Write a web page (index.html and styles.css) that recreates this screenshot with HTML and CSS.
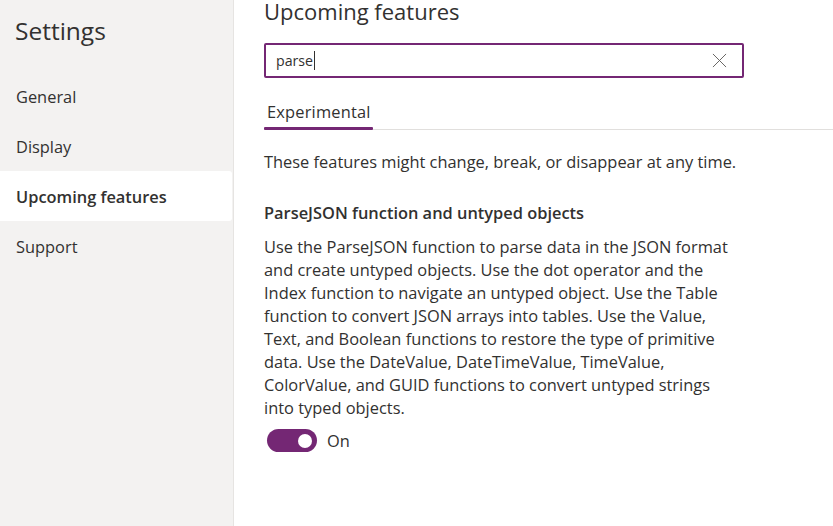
FILE: index.html
```html
<!DOCTYPE html>
<html lang="en">
<head>
<meta charset="utf-8">
<title>Settings</title>
<link rel="stylesheet" href="styles.css">
</head>
<body>
<div class="app">
  <aside class="sidebar">
    <h1 class="sidebar-title">Settings</h1>
    <nav class="nav">
      <div class="nav-item">General</div>
      <div class="nav-item">Display</div>
      <div class="nav-item selected">Upcoming features</div>
      <div class="nav-item">Support</div>
    </nav>
  </aside>
  <main class="main">
    <h2 class="page-title">Upcoming features</h2>
    <div class="search">
      <span class="search-text">parse</span><span class="caret"></span>
      <svg class="clear-icon" width="16" height="16" viewBox="0 0 16 16" aria-hidden="true">
        <path d="M1 1 L15 15 M15 1 L1 15" stroke="#605e5c" stroke-width="1" fill="none"/>
      </svg>
    </div>
    <div class="tabs">
      <div class="tab active">Experimental</div>
    </div>
    <p class="desc">These features might change, break, or disappear at any time.</p>
    <h3 class="feature-title">ParseJSON function and untyped objects</h3>
    <p class="feature-text">Use the ParseJSON function to parse data in the JSON format and create untyped objects. Use the dot operator and the Index function to navigate an untyped object. Use the Table function to convert JSON arrays into tables. Use the Value, Text, and Boolean functions to restore the type of primitive data. Use the DateValue, DateTimeValue, TimeValue, ColorValue, and GUID functions to convert untyped strings into typed objects.</p>
    <div class="toggle-row">
      <span class="toggle"><span class="knob"></span></span>
      <span class="toggle-label">On</span>
    </div>
  </main>
</div>
</body>
</html>
```

FILE: styles.css
```css
* { box-sizing: border-box; }
html, body {
  margin: 0;
  padding: 0;
  height: 100%;
  overflow: hidden;
}
body {
  font-family: "Segoe UI", "Open Sans", "Noto Sans", sans-serif;
  color: #323130;
  background: #ffffff;
  font-size: 16.4px;
}
.app {
  display: flex;
  height: 526px;
}
.sidebar {
  width: 234px;
  flex: none;
  background: #f3f2f1;
  border-right: 1px solid #e6e4e2;
  padding-right: 1px;
}
.sidebar-title {
  margin: 0;
  padding: 15px 0 0 15px;
  height: 71px;
  font-size: 24.5px;
  font-weight: 400;
  line-height: 32px;
}
.nav { display: flex; flex-direction: column; }
.nav-item {
  height: 50px;
  display: flex;
  align-items: center;
  padding-left: 16px;
  font-size: 16.4px;
}
.nav-item.selected {
  background: #ffffff;
  border-radius: 0 3px 3px 0;
  font-weight: 600;
}
.main {
  flex: 1;
  padding-left: 30px;
  min-width: 0;
}
.page-title {
  margin: 0;
  font-size: 22px;
  font-weight: 400;
  line-height: 22px;
  height: 22px;
}
.search {
  margin-top: 21px;
  width: 480px;
  height: 35px;
  border: 2px solid #742774;
  border-radius: 2px;
  display: flex;
  align-items: center;
  padding: 0 12px 0 10px;
}
.search-text {
  font-size: 14.2px;
  color: #323130;
}
.caret {
  width: 1px;
  height: 19px;
  background: #323130;
  margin-left: 1px;
}
.clear-icon {
  margin-left: auto;
  width: 15px;
  height: 15px;
  margin-right: 3px;
}
.tabs {
  margin-top: 17px;
  height: 35px;
  border-bottom: 1px solid #e1dfdd;
  display: flex;
}
.tab {
  position: relative;
  padding: 0 3px;
  font-size: 16.4px;
  letter-spacing: 0.2px;
  line-height: 34px;
  width: 109px;
}
.tab.active::after {
  content: "";
  position: absolute;
  left: 0;
  right: 0;
  bottom: -1px;
  height: 3px;
  background: #742774;
  border-radius: 1px;
}
.desc {
  margin: 20px 0 0 0;
  line-height: 23px;
}
.feature-title {
  margin: 28px 0 0 0;
  font-size: 16.4px;
  font-weight: 600;
  line-height: 23px;
}
.feature-text {
  margin: 11px 0 0 0;
  width: 470px;
  line-height: 23px;
}
.toggle-row {
  margin-top: 10px;
  display: flex;
  align-items: center;
  padding-left: 3px;
  gap: 10px;
}
.toggle {
  width: 50px;
  height: 23px;
  border-radius: 12px;
  background: #742774;
  display: flex;
  align-items: center;
  justify-content: flex-end;
  padding-right: 5px;
}
.knob {
  width: 14px;
  height: 14px;
  border-radius: 50%;
  background: #ffffff;
}
.toggle-label {
  line-height: 23px;
}
```
